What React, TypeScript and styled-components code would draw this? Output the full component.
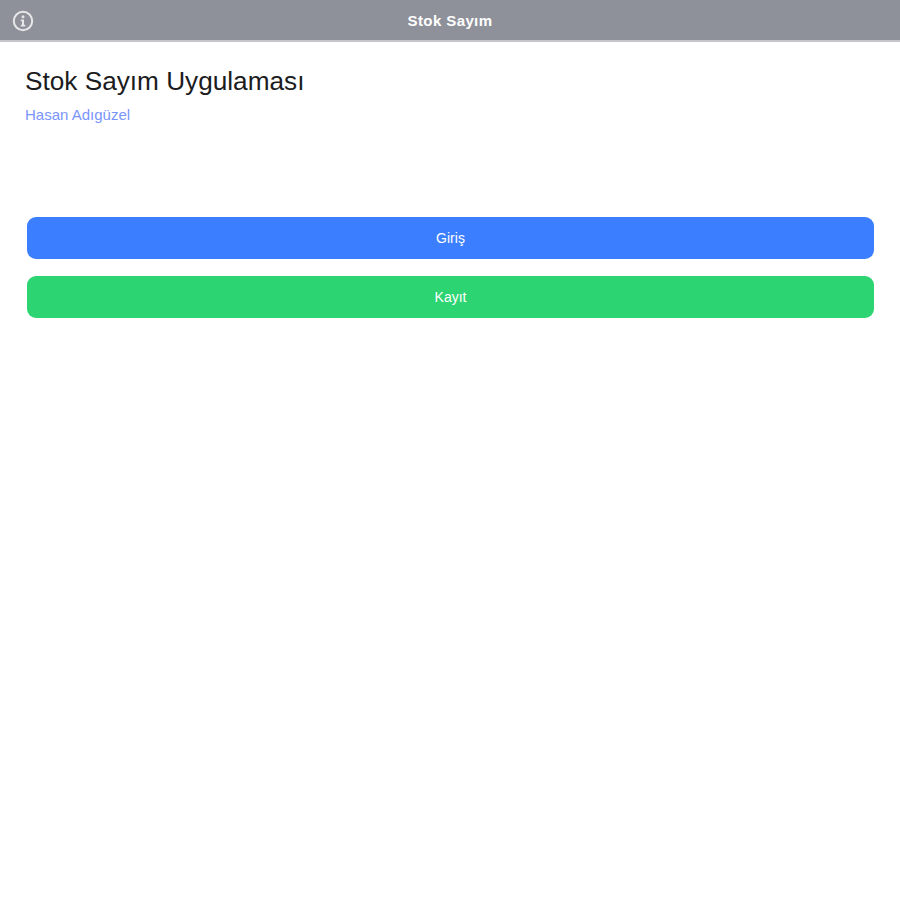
import React from "react";
import styled, { createGlobalStyle } from "styled-components";

const GlobalStyle = createGlobalStyle`
    html, body {
        margin: 0;
        padding: 0;
        background: #ffffff;
        font-family: "Liberation Sans", Arial, sans-serif;
    }
`;

const Page = styled.div`
    width: 900px;
    height: 900px;
    overflow: hidden;
    background: #ffffff;
`;

const NavBar = styled.header`
    display: grid;
    grid-template-columns: 1fr auto 1fr;
    align-items: center;
    height: 39px;
    padding: 1px 12px 0;
    background: #8e9199;
    border-bottom: 2px solid #c4c6ca;
`;

const NavButton = styled.div`
    display: flex;
    align-items: center;
`;

const NavTitle = styled.div`
    color: #ffffff;
    font-size: 15px;
    font-weight: 700;
    letter-spacing: 0.4px;
`;

const Intro = styled.section`
    padding: 25px 25px 0;
`;

const Title = styled.h1`
    margin: 0;
    color: #1c1c1e;
    font-size: 26.2px;
    font-weight: 400;
    line-height: 28px;
`;

const Author = styled.div`
    margin-top: 12px;
    color: #7a94fb;
    font-size: 15px;
    line-height: 16px;
`;

const Actions = styled.section`
    display: flex;
    flex-direction: column;
    gap: 17px;
    padding: 94px 26px 0 27px;
`;

const ActionButton = styled.button<{ $color: string }>`
    height: 42px;
    padding: 0;
    border: none;
    border-radius: 9px;
    background: ${(p) => p.$color};
    color: #ffffff;
    font-family: inherit;
    font-size: 14px;
`;

function InfoIcon() {
    return (
        <svg width="22" height="22" viewBox="0 0 22 22" fill="none">
            <circle cx="11" cy="11" r="9.2" stroke="#e6e7e9" strokeWidth="2" />
            <circle cx="11" cy="6.8" r="1.5" fill="#e6e7e9" />
            <path d="M8.8 9.6h3.2v5.2h1.3v1.6H8.8v-1.6h1.2v-3.6H8.8z" fill="#e6e7e9" />
        </svg>
    );
}

export default function App() {
    return (
        <Page>
            <GlobalStyle />
            <NavBar>
                <NavButton>
                    <InfoIcon />
                </NavButton>
                <NavTitle>Stok Sayım</NavTitle>
            </NavBar>
            <Intro>
                <Title>Stok Sayım Uygulaması</Title>
                <Author>Hasan Adıgüzel</Author>
            </Intro>
            <Actions>
                <ActionButton $color="#3b7eff">Giriş</ActionButton>
                <ActionButton $color="#2dd472">Kayıt</ActionButton>
            </Actions>
        </Page>
    );
}
